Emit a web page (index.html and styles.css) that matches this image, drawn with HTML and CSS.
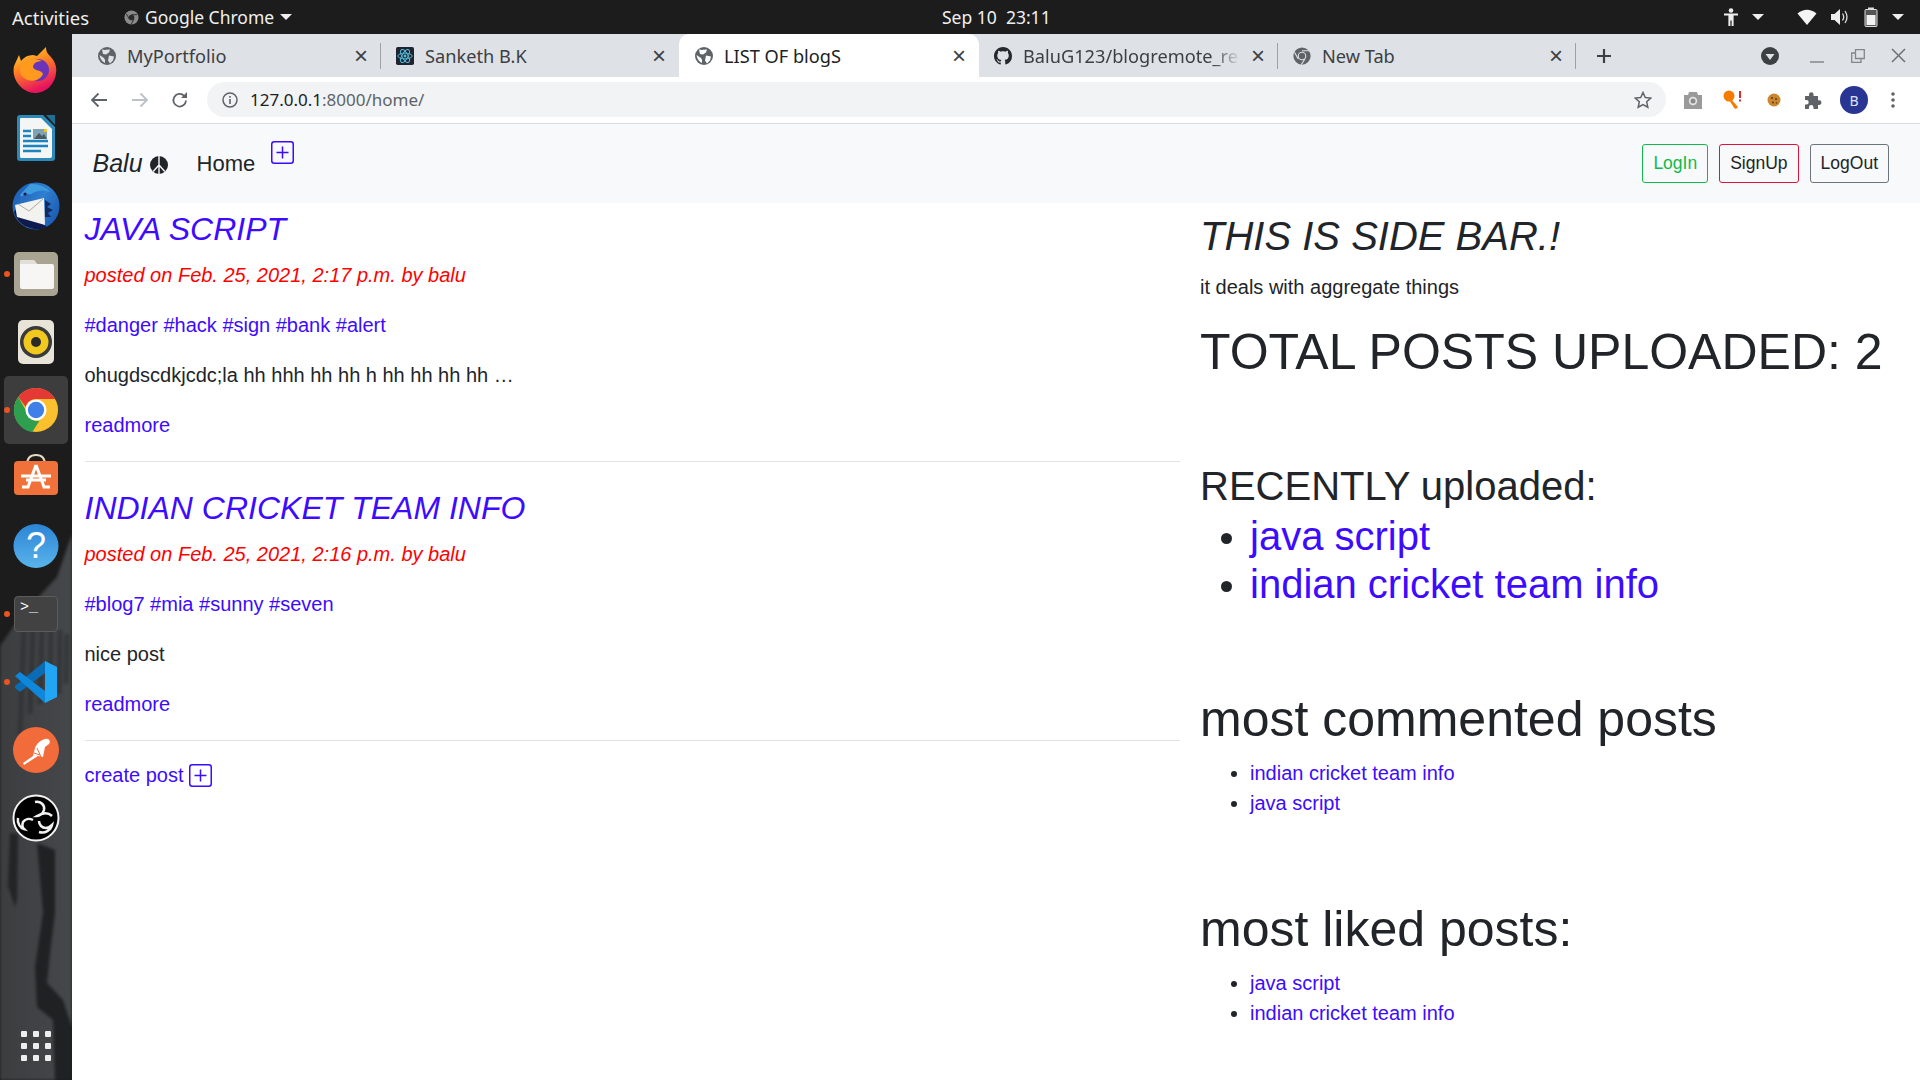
FILE: index.html
```html
<!DOCTYPE html>
<html lang="en">
<head>
<meta charset="utf-8">
<title>LIST OF blogS</title>
<link rel="stylesheet" href="styles.css">
</head>
<body>
<header class="topbar">
  <div class="top-left">
    <span class="activities">Activities</span>
    <svg class="top-chrome" width="15" height="15" viewBox="0 0 16 16"><circle cx="8" cy="8" r="7.5" fill="#8a8a8a"/><circle cx="8" cy="8" r="3" fill="#2b2b2b"/><path d="M8 5h6M5.5 9.5 2.6 4.2M10.6 9.5l-3 6" stroke="#2b2b2b" stroke-width="1"/></svg>
    <span class="appname">Google Chrome</span>
    <span class="caret"></span>
  </div>
  <div class="clock">Sep 10&nbsp; 23:11</div>
  <div class="top-right">
    <svg class="t-access" width="18" height="20" viewBox="0 0 18 20"><circle cx="9" cy="3.5" r="2.3" fill="#eee"/><path d="M2 6.5h14v2h-4.4V19h-2V13.5H8.400V19h-2V8.500H2z" fill="#eee"/></svg>
    <span class="caret c-access"></span>
    <svg class="t-wifi" width="20" height="16" viewBox="0 0 20 16"><path d="M0.500 4.500Q10-3 19.500 4.500L10 16z" fill="#f4f4f4"/></svg>
    <svg class="t-sound" width="20" height="18" viewBox="0 0 20 18"><path d="M1 6h3.500L10 1v16l-5.500-5H1z" fill="#eee"/><path d="M12.500 5.500q2.400 3.500 0 7M15 3q4 6 0 12" fill="none" stroke="#ddd" stroke-width="1.300"/></svg>
    <svg class="t-batt" width="14" height="20" viewBox="0 0 14 20"><rect x="4" y="0.500" width="6" height="2" fill="#ddd"/><rect x="1" y="2.500" width="12" height="17" rx="1" fill="#555" stroke="#ddd"/><rect x="2.500" y="8" width="9" height="10" fill="#f2f2f2"/></svg>
    <span class="caret c-batt"></span>
  </div>
</header>

<div class="desktop">
  <nav class="dock">
    <svg class="wallpaper" width="72" height="1046" viewBox="0 0 72 1046" aria-hidden="true">
      <defs><linearGradient id="wp" x1="0" y1="0" x2="1" y2="0"><stop offset="0" stop-color="#3b3d3f"/><stop offset="1" stop-color="#45474a"/></linearGradient></defs>
      <path d="M72 500V1046H0V612L20 583 57 543Z" fill="url(#wp)"/>
      <g fill="none" stroke="#26282a" stroke-width="5" opacity=".5">
        <path d="M24 596 20 700M33 592 30 680M42 590 40 670M51 592 50 660M60 596 59 660M67 600 66 650"/>
      </g>
      <path d="M10 799 18 800 17 866 15 873 8 852Z" fill="#222426"/>
      <path d="M37 809 55 816V879L50 919 47 949 63 966 72 993V1046H55L53 986 37 973 35 933 43 879Z" fill="#1f2123"/>
    </svg>

    <div class="dock-item">
      <svg width="50" height="50" viewBox="0 0 50 50"><defs><linearGradient id="ff" x1="0" y1="0" x2="0.400" y2="1"><stop offset="0" stop-color="#ffe03d"/><stop offset=".45" stop-color="#ff8a1f"/><stop offset="1" stop-color="#e8135e"/></linearGradient></defs><path d="M3 21 8 10l2 6c3-4 7-6 12-6l4 1 9-9c0 4 1 6 4 9 5 5 7 11 6 17-1 11-10 20-21 20C12 48 0 35 3 21Z" fill="url(#ff)"/><circle cx="27" cy="25" r="11" fill="#6a33b8"/><path d="M10 20c5-6 14-8 21-4-7 0-9 4-9 6 1 4 9 3 10 7-3 7-13 9-19 4-4-3-5-8-3-13Z" fill="#ff9a1f"/></svg>
    </div>
    <div class="dock-item">
      <svg width="40" height="48" viewBox="0 0 40 48"><path d="M4 1h23l12 12v31q0 3-3 3H4q-3 0-3-3V4q0-3 3-3Z" fill="#2d8ab8"/><path d="M5 4h20l11 11v27q0 2-2 2H5q-1 0-1-2V5q0-1 1-1Z" fill="#f4f6f6"/><path d="M30 1h9v10Z" fill="#1e6e96"/><path d="M7 17h8M7 22h8M7 27h25M7 32h25M7 37h18" stroke="#1b85c0" stroke-width="2.500"/><rect x="17" y="15" width="14" height="10" fill="#7fa3b3"/><path d="M18 25l5-6 3 3 2-2 3 5z" fill="#4a5a5f"/><rect x="28" y="15" width="3" height="3" fill="#f6c12a"/></svg>
    </div>
    <div class="dock-item">
      <svg width="48" height="48" viewBox="0 0 48 48"><defs><linearGradient id="tb" x1="0" y1="0" x2="1" y2="0.600"><stop offset="0" stop-color="#1a56b0"/><stop offset=".6" stop-color="#2f7fd0"/><stop offset="1" stop-color="#1d5fb5"/></linearGradient></defs><circle cx="24" cy="24" r="23.500" fill="url(#tb)"/><path d="M2 30q4 14 20 17 8 1 13-2L6 24Z" fill="#0f1a4e"/><path d="M8 13 18 2q12-1 20 8-8-3-15 0L11 16Z" fill="#3e9be0"/><path d="M7 18 13 11l6 2-8 8Z" fill="#2a6cc0"/><path d="M3 23 32 16 33 43 5 35Z" fill="#f2f2ef"/><path d="M6 22 17 29 31 17" fill="none" stroke="#a9a9a9" stroke-width="1"/><path d="M33 18l6 4-4 3 6 3-5 3 3 4-6 0Z" fill="#14295f"/><circle cx="13" cy="12" r="1.500" fill="#0d1840"/></svg>
    </div>
    <div class="dock-item">
      <i class="running"></i>
      <svg width="46" height="46" viewBox="0 0 46 46"><rect x="1" y="1" width="44" height="44" rx="5" fill="#a9a392"/><path d="M7 11q0-2 2-2h12l3 4h15q2 0 2 2v21q0 2-2 2H9q-2 0-2-2Z" fill="#f7f6f4"/><path d="M7 11q0-2 2-2h12l3 4H7Z" fill="#e2dfd8"/></svg>
    </div>
    <div class="dock-item">
      <svg width="38" height="46" viewBox="0 0 38 46"><rect x="1" y="1" width="36" height="44" rx="5" fill="#e8e4d8"/><circle cx="19" cy="23" r="16" fill="#3a3a3a"/><circle cx="19" cy="23" r="12.500" fill="#f1c81e"/><circle cx="19" cy="23" r="5" fill="#2a2a2a"/></svg>
    </div>
    <div class="dock-item active">
      <i class="running"></i>
      <svg width="46" height="46" viewBox="0 0 48 48"><circle cx="24" cy="24" r="23" fill="#fbc02d"/><path d="M24 1a23 23 0 0 1 20 11.500H24a11.500 11.500 0 0 0-11 8L5.500 10.500A23 23 0 0 1 24 1Z" fill="#e53935"/><path d="M5.500 10.500 15 27a11.500 11.500 0 0 0 12.500 8.500L20 47A23 23 0 0 1 5.500 10.500Z" fill="#2e9e4f"/><circle cx="24" cy="24" r="11" fill="#fff"/><circle cx="24" cy="24" r="8.500" fill="#3f7fe8"/></svg>
    </div>
    <div class="dock-item">
      <svg width="46" height="48" viewBox="0 3 46 48"><path d="M14 14q0-10 9-10t9 10" fill="none" stroke="#e7d8c4" stroke-width="2"/><rect x="1" y="10" width="44" height="34" rx="4" fill="#f0723a"/><path d="M23 14 15 36H9M23 14l8 22h6M13 29h20M8 25h30" fill="none" stroke="#fff" stroke-width="3"/></svg>
    </div>
    <div class="dock-item">
      <svg width="46" height="46" viewBox="0 0 46 46"><defs><linearGradient id="hp" x1="0" y1="0" x2="0" y2="1"><stop offset="0" stop-color="#2b84d6"/><stop offset="1" stop-color="#5ab4ea"/></linearGradient></defs><ellipse cx="23" cy="23" rx="22.500" ry="22" fill="url(#hp)"/><text class="help-mark" x="23" y="35" text-anchor="middle">?</text></svg>
    </div>
    <div class="dock-item">
      <i class="running"></i>
      <div class="terminal"><span class="prompt">&gt;_</span></div>
    </div>
    <div class="dock-item">
      <i class="running"></i>
      <svg width="44" height="44" viewBox="0 0 44 44"><path d="M31 1V13L6 32 1 28V26Z" fill="#0a6cb5"/><path d="M1 16 6 12 31 31V43Z" fill="#0f88dc"/><path d="M31 1 43 7V37L31 43Z" fill="#22a6f4"/></svg>
    </div>
    <div class="dock-item">
      <svg width="46" height="46" viewBox="0 0 46 46"><circle cx="23" cy="23" r="23" fill="#f26b3a"/><path d="M10 36 20 29l2-8c2-5 6-8 10-9 4-1 6 2 4 5l-4 3-2 10-5-1-14 9Z" fill="#fff"/><path d="M24 21l4 9M21 26l6 2" stroke="#f26b3a" stroke-width="1"/></svg>
    </div>
    <div class="dock-item">
      <svg width="48" height="48" viewBox="0 0 48 48"><circle cx="24" cy="24" r="22.500" fill="#000" stroke="#f2f2f2" stroke-width="2"/><path d="M23 8c6-1 10 3 9 8-1 4-5 6-7 6 5-3 11-4 15 0M21 26c-4-2-8-1-10 2-1 3 0 6 1 7-4-1-7-6-6-11M27 27c0 4 3 7 7 7 3 0 5-2 6-3-1 5-7 9-13 7" fill="none" stroke="#f2f2f2" stroke-width="2.500"/></svg>
    </div>
    <div class="apps-grid"><i></i><i></i><i></i><i></i><i></i><i></i><i></i><i></i><i></i></div>
  </nav>

  <div class="browser">
    <div class="tabstrip">
      <div class="tab">
        <svg class="fav" viewBox="0 0 18 18"><circle cx="9" cy="9" r="9" fill="#5f6368"/><path d="M4 2.500c3 1 6 0 8 0l-1 3-3 2-3-.5Zm7 6 5 1-1 4-3 3-2-3ZM1.500 8 6 11l1 2v3Q2.500 14 1.500 8Z" fill="#dee1e6"/></svg>
        <span class="tab-title">MyPortfolio</span><span class="x">×</span><i class="tab-sep"></i>
      </div>
      <div class="tab">
        <svg class="fav" viewBox="0 0 20 20"><rect width="20" height="20" rx="2" fill="#1f2430"/><g fill="none" stroke="#53c1de" stroke-width="1"><ellipse cx="10" cy="10" rx="8" ry="3.200"/><ellipse cx="10" cy="10" rx="8" ry="3.200" transform="rotate(60 10 10)"/><ellipse cx="10" cy="10" rx="8" ry="3.200" transform="rotate(120 10 10)"/></g><circle cx="10" cy="10" r="1.600" fill="#53c1de"/></svg>
        <span class="tab-title">Sanketh B.K</span><span class="x">×</span>
      </div>
      <div class="tab current">
        <svg class="fav" viewBox="0 0 18 18"><circle cx="9" cy="9" r="9" fill="#5f6368"/><path d="M4 2.500c3 1 6 0 8 0l-1 3-3 2-3-.5Zm7 6 5 1-1 4-3 3-2-3ZM1.500 8 6 11l1 2v3Q2.500 14 1.500 8Z" fill="#fff"/></svg>
        <span class="tab-title">LIST OF blogS</span><span class="x">×</span>
      </div>
      <div class="tab wide">
        <svg class="fav" viewBox="0 0 16 16"><path fill="#24292e" d="M8 0C3.580 0 0 3.580 0 8c0 3.540 2.290 6.530 5.470 7.590.4.070.55-.17.550-.38 0-.19-.01-.82-.01-1.490-2.010.370-2.530-.49-2.690-.94-.09-.23-.48-.94-.82-1.130-.28-.15-.68-.52-.01-.53.630-.01 1.080.58 1.230.82.720 1.210 1.870.870 2.330.66.070-.52.280-.87.510-1.070-1.780-.2-3.640-.89-3.640-3.950 0-.87.310-1.590.82-2.150-.08-.2-.36-1.020.08-2.120 0 0 .67-.21 2.200.82.640-.18 1.320-.27 2-.27s1.360.09 2 .27c1.530-1.040 2.200-.82 2.200-.82.440 1.100.16 1.920.08 2.120.51.560.82 1.270.82 2.150 0 3.070-1.870 3.750-3.650 3.950.29.250.54.730.54 1.480 0 1.070-.01 1.930-.01 2.200 0 .21.150.46.550.38A8.010 8.010 0 0 0 16 8c0-4.420-3.580-8-8-8Z"/></svg>
        <span class="tab-title fade">BaluG123/blogremote_re</span><span class="x">×</span><i class="tab-sep"></i>
      </div>
      <div class="tab">
        <svg class="fav" viewBox="0 0 48 48"><circle cx="24" cy="24" r="23" fill="#5f6368"/><path d="M24 10h20M14 32 4 14M32 32 22 47" stroke="#dee1e6" stroke-width="3"/><circle cx="24" cy="24" r="10" fill="#5f6368" stroke="#dee1e6" stroke-width="3"/></svg>
        <span class="tab-title">New Tab</span><span class="x">×</span><i class="tab-sep"></i>
      </div>
      <svg class="newtab" width="16" height="16" viewBox="0 0 16 16"><path d="M8 1v14M1 8h14" stroke="#3c4043" stroke-width="2.200"/></svg>
      <div class="win-controls">
        <svg width="18" height="18" viewBox="0 0 18 18"><circle cx="9" cy="9" r="9" fill="#3c4043"/><path d="M4.500 7h9L9 13z" fill="#dee1e6"/></svg>
        <svg class="w-min" width="14" height="14" viewBox="0 0 14 14"><path d="M0 13h14" stroke="#83868b" stroke-width="1.500"/></svg>
        <svg class="w-max" width="14" height="14" viewBox="0 0 14 14"><path d="M4.500.7h8.800v8.800H4.500zM4.500 4H.7v9.300H10V9.500" fill="none" stroke="#83868b" stroke-width="1.300"/></svg>
        <svg class="w-close" width="15" height="15" viewBox="0 0 15 15"><path d="M1 1l13 13M14 1 1 14" stroke="#6d7175" stroke-width="1.500"/></svg>
      </div>
    </div>

    <div class="toolbar">
      <svg class="tb-back" width="18" height="16" viewBox="0 0 18 16"><path d="M17 8H2M8.500 1.500 2 8l6.500 6.500" fill="none" stroke="#5f6368" stroke-width="1.800"/></svg>
      <svg class="tb-fwd" width="18" height="16" viewBox="0 0 18 16"><path d="M1 8h15M9.500 1.500 16 8l-6.500 6.500" fill="none" stroke="#bdc1c6" stroke-width="1.800"/></svg>
      <svg class="tb-reload" width="18" height="18" viewBox="0 0 18 18"><path d="M15 9.500a6.300 6.300 0 1 1-1.800-4.700" fill="none" stroke="#5f6368" stroke-width="1.800"/><path d="M16 1v6h-6z" fill="#5f6368"/></svg>
      <div class="omnibox">
        <svg class="info" width="16" height="16" viewBox="0 0 16 16"><circle cx="8" cy="8" r="7" fill="none" stroke="#5f6368" stroke-width="1.500"/><path d="M8 7v5M8 4v1.800" stroke="#5f6368" stroke-width="1.600"/></svg>
        <span class="url"><b>127.0.0.1</b>:8000/home/</span>
        <svg class="star" width="18" height="18" viewBox="0 0 18 18"><path d="m9 1.500 2.300 5 5.400.6-4 3.700 1.100 5.400L9 13.500l-4.800 2.700 1.100-5.400-4-3.700 5.400-.6Z" fill="none" stroke="#5f6368" stroke-width="1.500"/></svg>
      </div>
      <div class="exts">
        <svg class="e-cam" width="20" height="18" viewBox="0 0 20 18"><path d="M1 4h4l1-3h8l1 3h4v14H1z" fill="#9a9a9a"/><circle cx="10" cy="10" r="4.200" fill="#e5e5e5"/><circle cx="10" cy="10" r="2.500" fill="#8a8a8a"/></svg>
        <svg class="e-key" width="20" height="20" viewBox="0 0 20 20"><circle cx="6" cy="6" r="5.500" fill="#f57c00"/><path d="M8 9l7 8-2 2-2-1-1-2-4-6z" fill="#f57c00"/><path d="M17 1v7M17 9.500v2" stroke="#d32f2f" stroke-width="2"/></svg>
        <svg class="e-cookie" width="14" height="14" viewBox="0 0 14 14"><circle cx="7" cy="7" r="6.500" fill="#c9862d"/><circle cx="5" cy="5" r="1" fill="#5d3a10"/><circle cx="9" cy="6" r="1" fill="#5d3a10"/><circle cx="6" cy="9.500" r="1" fill="#5d3a10"/><circle cx="9.500" cy="10" r=".8" fill="#5d3a10"/></svg>
        <svg class="e-puzzle" width="18" height="18" viewBox="0 0 18 18"><path d="M1 5h4V3.500a2.300 2.300 0 0 1 4.600 0V5H14v4.300h1.200a2.300 2.300 0 0 1 0 4.600H14V18H9.500v-1.600a2.300 2.300 0 0 0-4.600 0V18H1v-4.500h1.400a2.300 2.300 0 0 0 0-4.600H1Z" fill="#5f6368"/></svg>
        <span class="avatar">B</span>
        <svg class="e-dots" width="4" height="16" viewBox="0 0 4 16"><circle cx="2" cy="2" r="1.800" fill="#5f6368"/><circle cx="2" cy="8" r="1.800" fill="#5f6368"/><circle cx="2" cy="14" r="1.800" fill="#5f6368"/></svg>
      </div>
    </div>

    <div class="navbar">
      <a class="brand">Balu</a>
      <svg class="peace" width="18" height="18" viewBox="0 0 18 18"><circle cx="9" cy="9" r="9" fill="#212529"/><path d="M9 0v18M9 9l-5.800 6.500M9 9l5.800 6.500" stroke="#f8f9fa" stroke-width="1.400"/></svg>
      <a class="home">Home</a>
      <svg class="plus-box nav-plus" viewBox="0 0 23 23"><rect x=".75" y=".75" width="21.500" height="21.500" rx="2.500"/><path d="M11.500 5.500v12M5.500 11.500h12"/></svg>
      <div class="nav-actions">
        <button class="btn btn-green">LogIn</button>
        <button class="btn btn-red">SignUp</button>
        <button class="btn btn-grey">LogOut</button>
      </div>
    </div>

    <main class="content">
      <section class="posts">
        <article class="post">
          <h2 class="post-title">JAVA SCRIPT</h2>
          <p class="meta">posted on Feb. 25, 2021, 2:17 p.m. by balu</p>
          <p class="tags">#danger #hack #sign #bank #alert</p>
          <p>ohugdscdkjcdc;la hh hhh hh hh h hh hh hh hh …</p>
          <p class="link">readmore</p>
        </article>
        <article class="post">
          <h2 class="post-title">INDIAN CRICKET TEAM INFO</h2>
          <p class="meta">posted on Feb. 25, 2021, 2:16 p.m. by balu</p>
          <p class="tags">#blog7 #mia #sunny #seven</p>
          <p>nice post</p>
          <p class="link">readmore</p>
        </article>
        <p class="create link">create post
          <svg class="plus-box create-plus" viewBox="0 0 23 23"><rect x=".75" y=".75" width="21.500" height="21.500" rx="2.500"/><path d="M11.500 5.500v12M5.500 11.500h12"/></svg>
        </p>
      </section>

      <aside class="sidebar">
        <h2 class="side-title">THIS IS SIDE BAR.!</h2>
        <p class="side-sub">it deals with aggregate things</p>
        <h1 class="total">TOTAL POSTS UPLOADED: 2</h1>
        <h2 class="recent">RECENTLY uploaded:</h2>
        <ul class="big-list">
          <li><span>java script</span></li>
          <li><span>indian cricket team info</span></li>
        </ul>
        <h2 class="section-head">most commented posts</h2>
        <ul class="small-list">
          <li><span>indian cricket team info</span></li>
          <li><span>java script</span></li>
        </ul>
        <h2 class="section-head">most liked posts:</h2>
        <ul class="small-list">
          <li><span>java script</span></li>
          <li><span>indian cricket team info</span></li>
        </ul>
      </aside>
    </main>
  </div>
</div>
</body>
</html>
```
FILE: styles.css
```css
* { box-sizing: border-box; }
html, body { margin: 0; height: 100%; overflow: hidden; }
body { width: 1920px; height: 1080px; font-family: "Liberation Sans", Arial, sans-serif; background: #fff; display: flex; flex-direction: column; color: #212529; }

/* GNOME top bar */
.topbar { height: 34px; flex: none; background: #1c1c1c; color: #f0f0f0; font-family: "Noto Sans", sans-serif; font-size: 17.500px; display: flex; align-items: center; position: relative; }
.top-left { display: flex; align-items: center; margin-left: 12px; }
.activities { width: 112px; font-size: 18.500px; }
.top-chrome { margin-right: 6px; }
.appname { width: 135px; }
.caret { width: 0; height: 0; border-left: 6px solid transparent; border-right: 6px solid transparent; border-top: 6px solid #eee; }
.clock { position: absolute; left: 942px; top: 0; line-height: 34px; }
.top-right { margin-left: auto; display: flex; align-items: center; padding-right: 16px; }
.c-access { margin-left: 12px; }
.t-wifi { margin-left: 33px; }
.t-sound { margin-left: 13px; }
.t-batt { margin-left: 14px; }
.c-batt { margin-left: 14px; }

.desktop { flex: 1; display: flex; min-height: 0; }

/* Dock */
.dock { width: 72px; flex: none; background: #1c1c1c; display: flex; flex-direction: column; align-items: center; padding-top: 2px; position: relative; overflow: hidden; }
.wallpaper { position: absolute; left: 0; top: 0; filter: blur(1.5px); }
.dock-item { width: 64px; height: 68px; flex: none; display: flex; align-items: center; justify-content: center; border-radius: 5px; position: relative; }
.dock-item.active { background: #3d3d3d; }
.running { position: absolute; left: 0; top: 31px; width: 6px; height: 6px; border-radius: 50%; background: #e95420; }
.help-mark { font-family: "Liberation Sans", sans-serif; font-size: 36px; fill: #fff; }
.terminal { width: 44px; height: 36px; background: #424242; border: 1px solid #5c5c5c; border-radius: 4px; color: #fff; font-family: "Liberation Mono", monospace; font-size: 15px; line-height: 18px; padding: 2px 0 0 5px; }
.prompt { display: block; }
.apps-grid { margin-top: auto; margin-bottom: 19px; width: 30px; display: grid; grid-template-columns: repeat(3, 6px); row-gap: 6px; column-gap: 6px; position: relative; }
.apps-grid i { width: 6px; height: 6px; background: #eee; border-radius: 1px; }

/* Browser chrome */
.browser { flex: 1; min-width: 0; display: flex; flex-direction: column; }
.tabstrip { height: 43px; flex: none; background: #dee1e6; display: flex; align-items: stretch; padding-left: 11px; color: #3c4043; font-family: "Noto Sans", sans-serif; font-size: 18.200px; }
.tab { width: 298px; flex: none; display: flex; align-items: center; padding: 0 13px 0 15px; position: relative; }
.tab.wide { width: 299px; }
.tab.current { background: #fff; border-radius: 10px 10px 0 0; width: 300px; color: #202124; padding-left: 16px; }
.fav { width: 18px; height: 18px; flex: none; margin-right: 11px; }
.tab-title { flex: 1; min-width: 0; white-space: nowrap; overflow: hidden; }
.tab-title.fade { -webkit-mask-image: linear-gradient(to right, #000 86%, transparent 99%); mask-image: linear-gradient(to right, #000 86%, transparent 99%); }
.x { width: 14px; margin-left: 8px; font-size: 24px; line-height: 1; color: #3c4043; text-align: center; font-family: "Liberation Sans", sans-serif; }
.tab-sep { position: absolute; right: 0; top: 9px; bottom: 8px; width: 1px; background: #9da0a5; }
.newtab { align-self: center; margin-left: 20px; }
.win-controls { margin-left: auto; display: flex; align-items: center; padding-right: 14px; }
.w-min { margin-left: 31px; }
.w-max { margin-left: 27px; }
.w-close { margin-left: 26px; }

.toolbar { height: 47px; flex: none; background: #fff; border-bottom: 1px solid #dadce0; display: flex; align-items: center; padding-left: 18px; }
.tb-fwd { margin-left: 23px; }
.tb-reload { margin-left: 22px; }
.omnibox { width: 1459px; height: 35px; margin-left: 18px; margin-top: -1px; background: #f1f3f4; border-radius: 18px; display: flex; align-items: center; padding: 0 14px 0 15px; }
.url { font-family: "Noto Sans", sans-serif; font-size: 17px; color: #5f6368; margin-left: 12px; }
.url b { font-weight: 400; color: #202124; }
.star { margin-left: auto; }
.exts { flex: 1; display: flex; align-items: center; padding-left: 17px; }
.e-key { margin-left: 20px; }
.e-cookie { margin-left: 24px; }
.e-puzzle { margin-left: 23px; }
.avatar { width: 28px; height: 28px; border-radius: 50%; background: #283593; color: #dfe3ff; font-family: "Noto Sans", sans-serif; font-size: 14px; display: flex; align-items: center; justify-content: center; margin-left: 18px; }
.e-dots { margin-left: 23px; }

/* Page navbar */
.navbar { height: 79px; flex: none; background: #f8f9fa; display: flex; align-items: center; padding: 0 31px 0 20.500px; font-size: 22px; }
.brand { font-size: 25px; font-style: italic; color: #212529; }
.peace { margin-left: 7px; margin-top: 3px; }
.home { margin-left: 29px; color: #212529; }
.plus-box { fill: none; stroke: #3d0bff; stroke-width: 1.500; }
.nav-plus { width: 23px; height: 23px; margin-left: 16px; margin-bottom: 23px; }
.nav-actions { margin-left: auto; display: flex; gap: 11px; }
.btn { height: 39px; padding: 0 10px; font-family: inherit; font-size: 17.500px; border-radius: 3px; background: transparent; color: #212529; border: 1px solid; }
.btn-green { color: #10b94c; border-color: #10b94c; }
.btn-red { border-color: #dc143c; }
.btn-grey { border-color: #6c757d; }

/* Page content */
.content { flex: 1; display: flex; gap: 20px; padding: 0 12px 0 12.500px; font-size: 20px; line-height: 30px; background: #fff; min-height: 0; }
.content p { margin: 0 0 20px; }
.posts { width: 1095.500px; flex: none; }
.post { border-bottom: 1px solid #e2e3e4; margin-bottom: 19px; padding-bottom: 1px; }
.post-title { font-size: 32px; line-height: 38px; font-weight: 400; font-style: italic; color: #3d0bff; margin: 7px 0 12px; }
.post + .post .post-title { margin-top: 27px; }
.content .meta { color: #f00; font-style: italic; }
.tags, .link { color: #3d0bff; }
.content .create { display: flex; align-items: center; gap: 6px; }
.create-plus { width: 23px; height: 23px; }
.sidebar { flex: 1; min-width: 0; }
.side-title { font-size: 40px; line-height: 48px; font-weight: 400; font-style: italic; margin: 9px 0 12px; }
.total { font-size: 50px; line-height: 60px; font-weight: 400; margin: 0 0 80px; }
.recent { font-size: 40px; line-height: 48px; font-weight: 400; margin: 0; }
.big-list { font-size: 40px; line-height: 48px; margin: 2px 0 81px; padding-left: 50px; }
.big-list li::marker { font-size: 36px; }
.big-list span, .small-list span { color: #3d0bff; }
.section-head { font-size: 50px; line-height: 60px; font-weight: 400; margin: 0 0 9px; }
.small-list { margin: 0 0 81px; padding-left: 50px; }
```
